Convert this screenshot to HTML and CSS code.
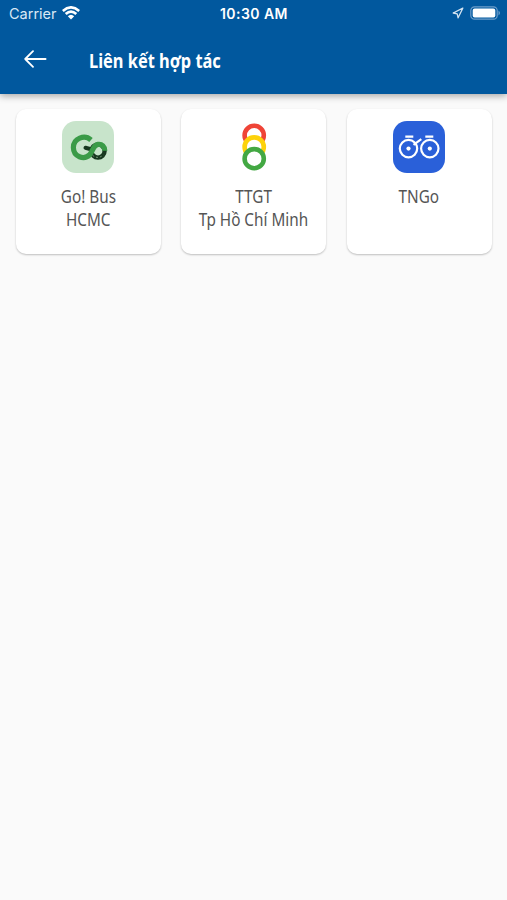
FILE: index.html
```html
<!DOCTYPE html>
<html lang="vi">
<head>
<meta charset="utf-8">
<title>Liên kết hợp tác</title>
<link rel="stylesheet" href="styles.css">
</head>
<body>
<header class="top">
  <div class="status">
    <div class="carrier">
      <span>Carrier</span>
      <svg width="18" height="14" viewBox="0 0 18 14" fill="none" stroke="#fff" stroke-width="2.7"><path d="M.8 5Q9-2.2 17.2 5M3.7 8.1Q9 3.3 14.3 8.1"/><path d="M5.8 10.3Q9 7.3 12.2 10.3L9 13.6z" fill="#fff" stroke="none"/></svg>
    </div>
    <div class="time">10:30 AM</div>
    <div class="indicators">
      <svg width="12" height="12" viewBox="0 0 12 12" fill="none" stroke="#d3e3f1" stroke-width="1.3" stroke-linejoin="round"><path d="M10.8 1.2 1.2 6l4 .8.9 4z"/></svg>
      <svg width="31" height="14" viewBox="0 0 31 14"><rect x=".8" y=".8" width="26.4" height="12.4" rx="3.7" fill="none" stroke="#6d9dca" stroke-width="1.2"/><rect x="2.7" y="2.6" width="22.6" height="8.8" rx="2" fill="#fff"/><path d="M28.5 4.6q3 2.4 0 4.8z" fill="#6d9dca"/></svg>
    </div>
  </div>
  <div class="bar">
    <svg class="back" width="24" height="18" viewBox="0 0 24 18" fill="none" stroke="#fff" stroke-width="1.8" stroke-linecap="round" stroke-linejoin="round"><path d="M21.6 9H1.2M9 1.2 1.2 9 9 16.8"/></svg>
    <h1>Liên kết hợp tác</h1>
  </div>
</header>
<main class="grid">
  <article class="card">
    <svg class="icon" viewBox="0 0 52 52"><rect width="52" height="52" rx="14" fill="#c8e4cb"/>
      <g fill="none"><path d="M23.5 26.8 28 28" stroke="#17371f" stroke-width="4" stroke-linecap="round"/><circle cx="36" cy="30" r="6.6" stroke="#17371f" stroke-width="4.4"/><path d="M30.5 34.2q5 4.5 11-.3" stroke="#8eb08d" stroke-width=".8" stroke-dasharray="2 2"/><path d="M29 19C22.5 13.3 11.4 17.3 11.4 26.6c0 9 10.6 13 16.4 7 3-3.2 3-9.2 8.2-10.2 4-.7 6.9 2.6 6.8 6.4" stroke="#3b9b48" stroke-width="5.2"/></g></svg>
    <p><span>Go! Bus</span><span>HCMC</span></p>
  </article>
  <article class="card">
    <svg class="icon" viewBox="0 0 52 52" fill="none" stroke-width="4.6"><circle cx="26.2" cy="14.3" r="9.6" stroke="#ef4437"/><circle cx="26.2" cy="26" r="9.6" fill="#fff" stroke="#fdd20b"/><circle cx="26.2" cy="37.7" r="9.6" fill="#fff" stroke="#43a843"/></svg>
    <p><span>TTGT</span><span>Tp Hồ Chí Minh</span></p>
  </article>
  <article class="card">
    <svg class="icon" viewBox="0 0 52 52"><rect width="52" height="52" rx="14" fill="#2a60d9"/><g fill="none" stroke="#fff" stroke-width="2.2"><circle cx="15.5" cy="27.6" r="8.7"/><path d="M20.5 23.8l7.8-5.6M12.3 15.7h8M32.3 15.7h8"/><circle cx="36.8" cy="27.6" r="8.7"/></g><circle cx="15.5" cy="27.6" r="2.1" fill="#fff"/><circle cx="36.8" cy="27.6" r="2.1" fill="#fff"/></svg>
    <p><span>TNGo</span></p>
  </article>
</main>
</body>
</html>
```
FILE: styles.css
```css
* { box-sizing: border-box; }
body {
  margin: 0;
  min-height: 900px;
  background: #fafafa;
  font-family: "Noto Sans", sans-serif;
}
.top {
  height: 94px;
  background: #01589e;
  color: #fff;
  box-shadow: 0 2px 7px rgba(0, 0, 0, .34);
}
.status {
  display: grid;
  grid-template-columns: 1fr auto 1fr;
  align-items: center;
  height: 28px;
  padding: 0 6px 0 9px;
  font: 14.5px/28px Inter, sans-serif;
}
.carrier, .indicators { display: flex; align-items: center; }
.carrier { gap: 5px; color: #d9e8f5; }
.carrier svg { margin-top: -2px; }
.time { margin-left: -2px; font-weight: 600; font-size: 14px; letter-spacing: .45px; }
.indicators { justify-content: flex-end; gap: 6px; margin-top: -2px; }
.bar { display: flex; height: 66px; padding: 22px 24px 0; }
h1 {
  margin: -2px 0 0 41px;
  font-size: 19.5px;
  line-height: 26px;
  font-weight: 700;
  white-space: nowrap;
  transform: scaleX(.84);
  transform-origin: left;
}
.grid {
  display: grid;
  grid-template-columns: repeat(3, 145px);
  gap: 20.5px;
  padding: 15px 15.7px;
}
.card {
  height: 145px;
  padding-top: 12px;
  border-radius: 10px;
  background: #fff;
  text-align: center;
  box-shadow: 0 1px 2px rgba(0, 0, 0, .24);
}
.icon { display: block; width: 52px; height: 52px; margin: 0 auto; }
.card p {
  display: flex;
  flex-direction: column;
  align-items: center;
  margin: 11.5px 0 0;
  color: #555;
  font-size: 18px;
  line-height: 23px;
  white-space: nowrap;
}
.card span { transform: scaleX(.85); }
```
